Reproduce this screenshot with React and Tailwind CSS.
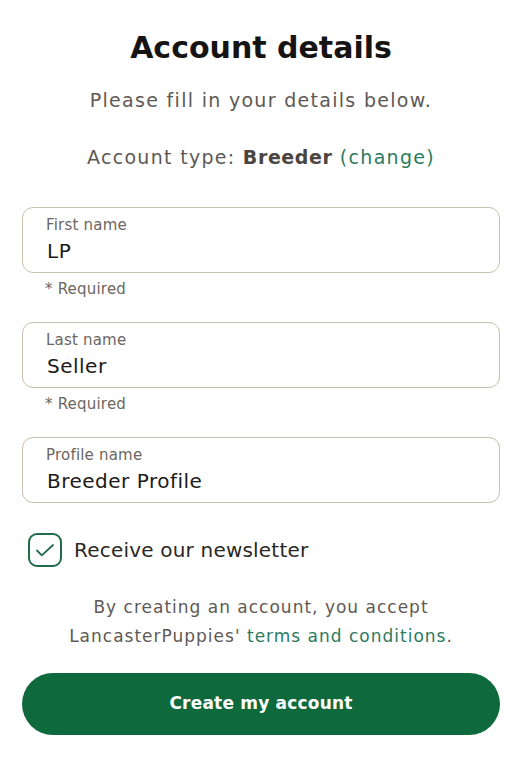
import React from 'react';

const font = { fontFamily: '"DejaVu Sans", "Liberation Sans", sans-serif' };

const Field = ({ label, value, required }) => (
  <div className="flex flex-col">
    <div className="flex h-[66px] flex-col justify-center rounded-[11px] border border-[#c9c0ae] px-[23px]">
      <span className="text-[15px] leading-[19px] tracking-[0.2px] text-[#6b6661]">{label}</span>
      <span className="mt-[3px] pl-[1px] text-[20px] leading-[26px] tracking-[0.5px] text-[#1c1a18]">{value}</span>
    </div>
    {required && (
      <span className="mt-[5px] pl-[23px] text-[15px] leading-[22px] tracking-[0.2px] text-[#6b6661]">* Required</span>
    )}
  </div>
);

export default function App() {
  return (
    <div className="min-h-[760px] w-[532px] bg-white" style={font}>
      <div className="flex flex-col pl-[22px] pr-[32px] pt-[26px]">
        <h1 className="text-center text-[30px] font-bold leading-[44px] text-[#161412]">Account details</h1>
        <p className="mt-[17px] text-center text-[19px] leading-[26px] tracking-[1.3px] text-[#5e5955]">
          Please fill in your details below.
        </p>
        <p className="mt-[31px] text-center text-[19px] leading-[26px] tracking-[1.3px] text-[#5e5955]">
          Account type: <span className="font-bold tracking-[0.6px] text-[#4a4541]">Breeder</span>{' '}
          <span className="text-[#2c7a5f]">(change)</span>
        </p>

        <div className="mt-[37px] flex flex-col gap-[22px]">
          <Field label="First name" value="LP" required />
          <Field label="Last name" value="Seller" required />
          <Field label="Profile name" value="Breeder Profile" />
        </div>

        <label className="mt-[30px] flex items-center gap-[12px] pl-[6px]">
          <span className="flex h-[34px] w-[34px] items-center justify-center rounded-[9px] border-2 border-[#1f6b4c]">
            <svg width="24" height="24" viewBox="0 0 24 24" fill="none" stroke="#1f6b4c" strokeWidth="1.8" strokeLinecap="round" strokeLinejoin="round">
              <path d="M4 12.5l4.8 4.8L20 7" />
            </svg>
          </span>
          <span className="text-[20px] leading-[28px] tracking-[0.2px] text-[#2a2724]">Receive our newsletter</span>
        </label>

        <p className="mt-[26px] text-center text-[17px] leading-[29px] tracking-[1px] text-[#5e5955]">
          By creating an account, you accept
          <br />
          LancasterPuppies' <span className="text-[#2c7a5f]">terms and conditions</span>.
        </p>

        <button
          type="button"
          className="mt-[22px] h-[62px] w-full rounded-full bg-[#0e6a3d] text-[17px] font-bold tracking-[0.2px] text-white"
        >
          Create my account
        </button>
      </div>
    </div>
  );
}
